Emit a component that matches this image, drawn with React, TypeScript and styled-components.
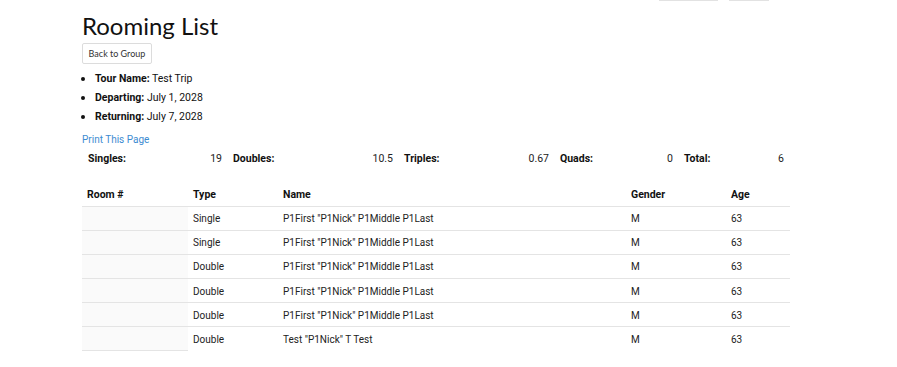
import React from 'react';
import { styled, createGlobalStyle } from 'styled-components';

type Room = {
  type: string;
  name: string;
  gender: string;
  age: number;
};

const rooms: Room[] = [
  { type: 'Single', name: 'P1First "P1Nick" P1Middle P1Last', gender: 'M', age: 63 },
  { type: 'Single', name: 'P1First "P1Nick" P1Middle P1Last', gender: 'M', age: 63 },
  { type: 'Double', name: 'P1First "P1Nick" P1Middle P1Last', gender: 'M', age: 63 },
  { type: 'Double', name: 'P1First "P1Nick" P1Middle P1Last', gender: 'M', age: 63 },
  { type: 'Double', name: 'P1First "P1Nick" P1Middle P1Last', gender: 'M', age: 63 },
  { type: 'Double', name: 'Test "P1Nick" T Test', gender: 'M', age: 63 },
];

const stats = [
  { label: 'Singles:', value: '19', width: 145 },
  { label: 'Doubles:', value: '10.5', width: 171 },
  { label: 'Triples:', value: '0.67', width: 156 },
  { label: 'Quads:', value: '0', width: 124 },
  { label: 'Total:', value: '6', width: 111 },
];

const GlobalStyle = createGlobalStyle`
  body {
    margin: 0;
    background: #fff;
    font-family: Roboto, "Liberation Sans", sans-serif;
    color: #222;
  }
`;

export default function App(): JSX.Element {
  return (
    <>
      <GlobalStyle />
      <Toolbar>
        <ToolEdge $width={59} />
        <ToolEdge $width={40} />
      </Toolbar>
      <Page>
        <Title>Rooming List</Title>
        <BackButton>Back to Group</BackButton>

        <InfoList>
          <li>
            <b>Tour Name:</b> Test Trip
          </li>
          <li>
            <b>Departing:</b> July 1, 2028
          </li>
          <li>
            <b>Returning:</b> July 7, 2028
          </li>
        </InfoList>

        <PrintLink href="#">Print This Page</PrintLink>

        <StatsRow>
          {stats.map((s) => (
            <Stat key={s.label} $width={s.width}>
              <StatLabel>{s.label}</StatLabel>
              <StatValue>{s.value}</StatValue>
            </Stat>
          ))}
        </StatsRow>

        <Table>
          <thead>
            <tr>
              <Th $width={106}>Room #</Th>
              <Th $width={90}>Type</Th>
              <Th $width={348}>Name</Th>
              <Th $width={100}>Gender</Th>
              <Th>Age</Th>
            </tr>
          </thead>
          <tbody>
            {rooms.map((r, i) => (
              <Row key={i} $last={i === rooms.length - 1}>
                <RoomCell />
                <Td>{r.type}</Td>
                <Td>{r.name}</Td>
                <Td>{r.gender}</Td>
                <Td>{r.age}</Td>
              </Row>
            ))}
          </tbody>
        </Table>
      </Page>
    </>
  );
}

const Toolbar = styled.div`
  display: flex;
  gap: 11px;
  padding-left: 659px;
  height: 1px;
`;

const ToolEdge = styled.span<{ $width: number }>`
  width: ${({ $width }) => $width}px;
  height: 0;
  border-bottom: 1px solid #e2e2e2;
`;

const Page = styled.div`
  padding: 0 0 0 82px;
  width: 708px;
`;

const Title = styled.h1`
  margin: 10px 0 2px;
  font-family: Lato, "Open Sans", sans-serif;
  font-weight: 400;
  font-size: 24px;
  line-height: 30px;
  color: #111;
`;

const BackButton = styled.button`
  display: block;
  width: 70px;
  height: 21px;
  padding: 0;
  background: #fff;
  border: 1px solid #dcdcdc;
  border-radius: 2px;
  font-family: Lato, "Open Sans", sans-serif;
  font-size: 9px;
  color: #333;
`;

const InfoList = styled.ul`
  margin: 5px 0 7px;
  padding-left: 13px;
  font-size: 10.5px;
  line-height: 19px;
  color: #111;

  li::marker {
    font-size: 12px;
  }

  b {
    font-weight: 700;
  }
`;

const PrintLink = styled.a`
  display: block;
  font-size: 10px;
  line-height: 14px;
  color: #3d8bd1;
  text-decoration: none;
`;

const StatsRow = styled.div`
  display: flex;
  margin-top: 5px;
  font-size: 10.5px;
  line-height: 14px;
  color: #111;
`;

const Stat = styled.div<{ $width: number }>`
  display: flex;
  justify-content: space-between;
  width: ${({ $width }) => $width}px;
  padding: 0 5px 0 6px;
  box-sizing: border-box;
`;

const StatLabel = styled.span`
  font-weight: 700;
`;

const StatValue = styled.span`
  color: #222;
`;

const Table = styled.table`
  width: 708px;
  margin-top: 17px;
  border-collapse: collapse;
  table-layout: fixed;
  font-size: 10px;
  color: #222;
`;

const Th = styled.th<{ $width?: number }>`
  ${({ $width }) => ($width ? `width: ${$width}px;` : '')}
  box-sizing: border-box;
  height: 23px;
  padding: 0 5px;
  text-align: left;
  font-size: 10.5px;
  font-weight: 700;
  color: #111;
  border-bottom: 1px solid #e4e4e4;
`;

const Row = styled.tr<{ $last: boolean }>`
  td {
    border-bottom: ${({ $last }) => ($last ? 'none' : '1px solid #e4e4e4')};
  }
`;

const Td = styled.td`
  height: 22.2px;
  padding: 1px 5px 0;
`;

const RoomCell = styled.td`
  height: 22.2px;
  padding: 0;
  background: #fafafa;

  tr:last-child > & {
    border-bottom: 1px solid #e4e4e4;
  }
`;
